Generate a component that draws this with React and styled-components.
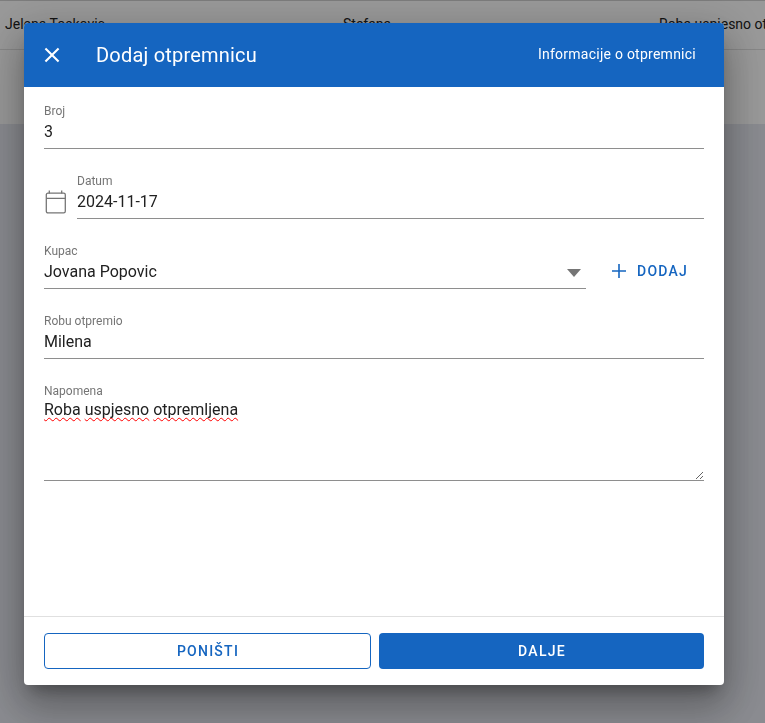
import styled, { createGlobalStyle } from "styled-components";

const GlobalStyle = createGlobalStyle`
  html, body {
    margin: 0;
    padding: 0;
    height: 100%;
    overflow: hidden;
    font-family: Roboto, "Liberation Sans", sans-serif;
  }
`;

const App = () => {
  return (
    <>
      <GlobalStyle />
      <Page>
        <TableBand>
          <TableRow>
            <TableCell $width="338px">Jelena Toskovic</TableCell>
            <TableCell $width="316px">Stefana</TableCell>
            <TableCell>Roba uspjesno otpremljena</TableCell>
          </TableRow>
        </TableBand>
      </Page>
      <Backdrop />
      <Modal>
        <Header>
          <CloseButton aria-label="close">
            <svg width="24" height="24" viewBox="0.5 0.5 23 23" fill="currentColor">
              <path d="M19 6.41 17.59 5 12 10.59 6.41 5 5 6.41 10.59 12 5 17.59 6.41 19 12 13.41 17.59 19 19 17.59 13.41 12z" />
            </svg>
          </CloseButton>
          <Title>Dodaj otpremnicu</Title>
          <HeaderInfo>Informacije o otpremnici</HeaderInfo>
        </Header>
        <Body>
          <Field>
            <Label>Broj</Label>
            <Value>3</Value>
          </Field>
          <DateRow>
            <CalendarIcon viewBox="0 0 22 24" fill="none" stroke="#757575" strokeWidth="1.3">
              <rect x="2.3" y="3.2" width="19" height="19.7" rx="1.6" />
              <path d="M2.3 8.3h19M5.3 .5v3M17.7 .5v3" />
            </CalendarIcon>
            <RowField>
              <Label>Datum</Label>
              <Value>2024-11-17</Value>
            </RowField>
          </DateRow>
          <CustomerRow>
            <RowField>
              <Label>Kupac</Label>
              <SelectValue>
                Jovana Popovic
                <Arrow />
              </SelectValue>
            </RowField>
            <AddButton>
              <svg width="18" height="18" viewBox="0 0 18 18" fill="none" stroke="currentColor" strokeWidth="1.6">
                <path d="M9 2v14M2 9h14" />
              </svg>
              DODAJ
            </AddButton>
          </CustomerRow>
          <Field>
            <Label>Robu otpremio</Label>
            <Value>Milena</Value>
          </Field>
          <Field>
            <Label>Napomena</Label>
            <NoteArea>
              <Misspelled>Roba</Misspelled> <Misspelled>uspjesno</Misspelled>{" "}
              <Misspelled>otpremljena</Misspelled>
            </NoteArea>
          </Field>
        </Body>
        <Footer>
          <CancelButton>PONIŠTI</CancelButton>
          <NextButton>DALJE</NextButton>
        </Footer>
      </Modal>
    </>
  );
};

export default App;

const Page = styled.div`
  height: 723px;
  background: #e6e8f0;
`;

const TableBand = styled.div`
  height: 124px;
  background: #fff;
  border-top: 1px solid #d0d0d0;
  box-sizing: border-box;
`;

const TableRow = styled.div`
  display: flex;
  height: 48px;
  box-sizing: content-box;
  align-items: center;
  padding-left: 5px;
  border-bottom: 1px solid #e0e0e0;
  white-space: nowrap;
  overflow: hidden;
  font-size: 14px;
  color: #212121;
`;

const TableCell = styled.div`
  flex: 0 0 ${(p) => p.$width || "auto"};
  margin-bottom: 3px;
`;

const Backdrop = styled.div`
  position: fixed;
  inset: 0;
  background: rgba(0, 0, 0, 0.4);
`;

const Modal = styled.div`
  position: fixed;
  left: 24px;
  top: 23px;
  width: 700px;
  height: 662px;
  display: flex;
  flex-direction: column;
  background: #fff;
  border-radius: 4px;
  overflow: hidden;
  box-shadow: 0 11px 15px -7px rgba(0, 0, 0, 0.3), 0 24px 38px 3px rgba(0, 0, 0, 0.2),
    0 9px 46px 8px rgba(0, 0, 0, 0.16);
`;

const Header = styled.div`
  flex: 0 0 64px;
  display: flex;
  align-items: center;
  padding: 0 28px 0 16px;
  background: #1565c0;
  color: #fff;
`;

const CloseButton = styled.div`
  width: 24px;
  height: 24px;
  display: flex;
`;

const Title = styled.div`
  margin-left: 32px;
  font-size: 20px;
  font-weight: 400;
  letter-spacing: 0.2px;
`;

const HeaderInfo = styled.div`
  margin-left: auto;
  margin-bottom: 2px;
  font-size: 14px;
  letter-spacing: 0.25px;
`;

const Body = styled.div`
  flex: 1;
  display: flex;
  flex-direction: column;
  gap: 24px;
  padding: 16px 20px 0;
`;

const Field = styled.div`
  display: flex;
  flex-direction: column;
  border-bottom: 1px solid #8e8e8e;
`;

const RowField = styled(Field)`
  flex: 1;
`;

const Label = styled.div`
  height: 16px;
  font-size: 12px;
  line-height: 16px;
  color: #757575;
`;

const Value = styled.div`
  height: 29px;
  font-size: 16px;
  line-height: 24px;
  padding-top: 1px;
  box-sizing: border-box;
  color: #212121;
`;

const DateRow = styled.div`
  display: flex;
  align-items: flex-end;
  gap: 11px;
`;

const CalendarIcon = styled.svg`
  width: 22px;
  height: 24px;
  margin-bottom: 5px;
`;

const CustomerRow = styled.div`
  display: flex;
  align-items: center;
`;

const SelectValue = styled(Value)`
  display: flex;
  align-items: flex-start;
  justify-content: space-between;
  padding-right: 5px;
`;

const Arrow = styled.span`
  width: 0;
  height: 0;
  margin-top: 9px;
  border-left: 7.5px solid transparent;
  border-right: 7.5px solid transparent;
  border-top: 8px solid #757575;
`;

const AddButton = styled.div`
  flex: 0 0 118px;
  display: flex;
  align-items: center;
  gap: 9px;
  margin-top: 10px;
  padding-left: 24px;
  box-sizing: border-box;
  font-size: 14px;
  font-weight: 500;
  letter-spacing: 1.25px;
  color: #1565c0;
`;

const NoteArea = styled.div`
  height: 82px;
  margin-top: -1px;
  font-size: 16px;
  line-height: 24px;
  color: #212121;
  resize: vertical;
  overflow: auto;
  box-sizing: border-box;
`;

const Misspelled = styled.span`
  text-decoration: underline wavy #f00 1px;
  text-decoration-skip-ink: none;
  text-underline-offset: 2px;
`;

const Footer = styled.div`
  flex: 0 0 69px;
  display: grid;
  grid-template-columns: 327px 325px;
  gap: 8px;
  padding: 16px 20px;
  box-sizing: border-box;
  border-top: 1px solid #e0e0e0;
`;

const FooterButton = styled.div`
  display: flex;
  align-items: center;
  justify-content: center;
  padding-left: 1px;
  border-radius: 4px;
  box-sizing: border-box;
  font-size: 14px;
  font-weight: 500;
  letter-spacing: 1.25px;
`;

const CancelButton = styled(FooterButton)`
  border: 1px solid #1565c0;
  color: #1565c0;
`;

const NextButton = styled(FooterButton)`
  background: #1565c0;
  color: #fff;
`;
